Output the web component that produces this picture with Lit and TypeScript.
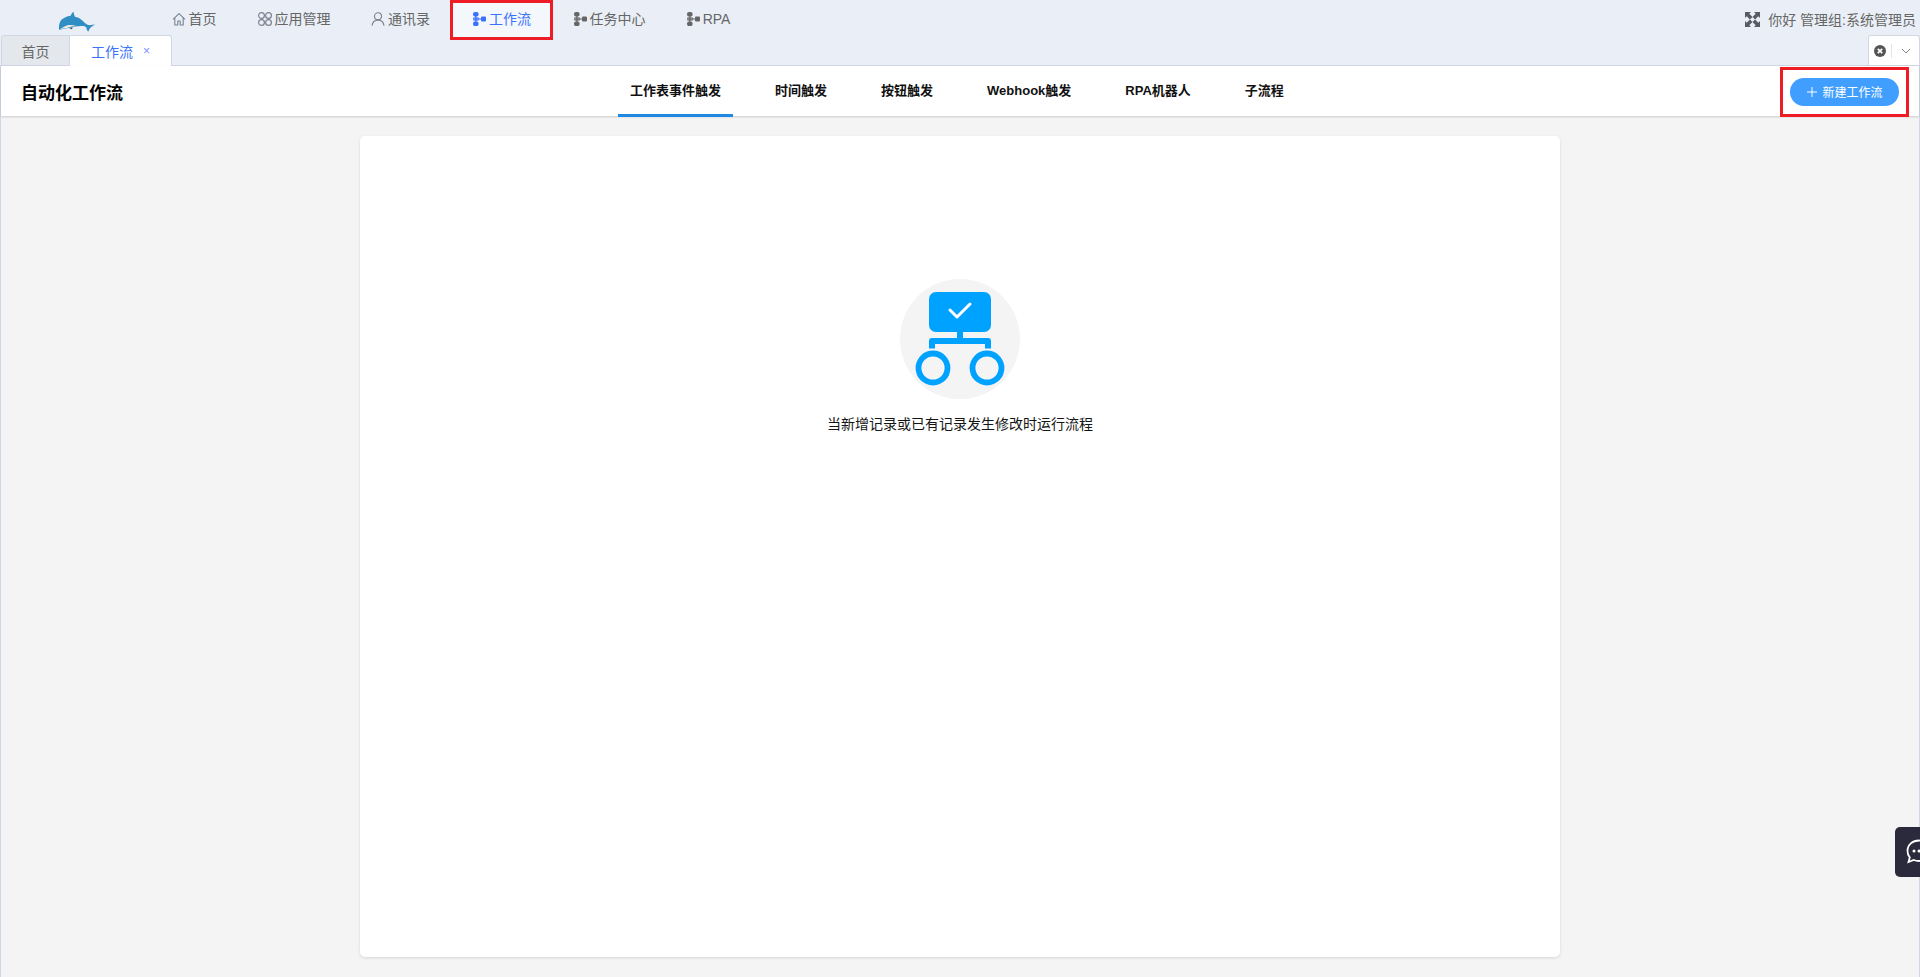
import { LitElement, html, css, svg } from 'lit';
import { customElement } from 'lit/decorators.js';

const homeIcon = svg`<path d="M1 7.300 7 1.600l6 5.700M2.800 6v7h3V9h2.400v4h3V6" fill="none" stroke="#7a828e" stroke-width="1.100" stroke-linejoin="round"/>`;
const appsIcon = svg`<g fill="none" stroke="#7a828e" stroke-width="1.200"><circle cx="3.500" cy="3.500" r="2.900"/><circle cx="10.500" cy="3.500" r="2.900"/><circle cx="3.500" cy="10.500" r="2.900"/><circle cx="10.500" cy="10.500" r="2.900"/></g>`;
const userIcon = svg`<g fill="none" stroke="#7a828e" stroke-width="1.100"><circle cx="7" cy="4.300" r="3.500"/><path d="M1 13.800c.4-3.400 2.900-5.700 6-5.700s5.600 2.300 6 5.700"/></g>`;
const flowIcon = svg`<g fill="currentColor"><rect x="1" y="0" width="5.600" height="4.600" rx="2"/><rect x="1" y="9.500" width="5.600" height="4.600" rx="2"/><rect x="1" y="5.200" width="6" height="3.600" rx="1" opacity="0.75"/><rect x="9" y="4.600" width="5" height="5" rx="1"/><rect x="2.900" y="4" width="1.800" height="6" opacity="0.75"/><rect x="6" y="6.300" width="4" height="1.400" opacity="0.75"/></g>`;

const navItems = [
    { label: '首页', icon: homeIcon, width: 86 },
    { label: '应用管理', icon: appsIcon, width: 114 },
    { label: '通讯录', icon: userIcon, width: 99 },
    { label: '工作流', icon: flowIcon, width: 103, active: true },
    { label: '任务中心', icon: flowIcon, width: 112 },
    { label: 'RPA', icon: flowIcon, width: 86 },
];

const triggerTabs = ['工作表事件触发', '时间触发', '按钮触发', 'Webhook触发', 'RPA机器人', '子流程'];

@customElement('app-root')
export class AppRoot extends LitElement {
    static styles = css`
        :host {
            display: flex;
            flex-direction: column;
            height: 100vh;
            overflow: hidden;
            position: relative;
            font-family: 'Liberation Sans', 'Noto Sans CJK SC', sans-serif;
            font-size: 14px;
            color: #666;
            background: #f4f4f4;
        }

        /* top bar */
        .top {
            flex: none;
            height: 65px;
            background: #eaeff7;
            display: flex;
            flex-direction: column;
        }

        .nav-row {
            height: 35px;
            display: flex;
            align-items: flex-start;
            position: relative;
        }

        .logo {
            width: 151px;
            height: 35px;
            flex: none;
        }

        .logo svg {
            display: block;
        }

        .nav {
            display: flex;
        }

        .nav-item {
            box-sizing: border-box;
            height: 40px;
            display: flex;
            align-items: flex-start;
            justify-content: center;
            gap: 3px;
            padding-top: 11px;
            line-height: 16px;
            white-space: nowrap;
            color: #666;
        }

        .nav-item svg {
            width: 14px;
            height: 14px;
            margin-top: 1px;
            flex: none;
        }

        .nav-item.active {
            color: #3a72ff;
            background: #f4f7fb;
            border: 3px solid #ee1c25;
            padding-top: 8px;
            position: relative;
            z-index: 1;
        }

        .user {
            margin-left: auto;
            display: flex;
            align-items: center;
            gap: 8px;
            height: 38px;
            padding-right: 4px;
            white-space: nowrap;
        }

        .user svg {
            width: 15px;
            height: 15px;
        }

        .tab-row {
            flex: 1;
            display: flex;
            align-items: flex-end;
            padding-left: 1px;
        }

        .page-tab {
            box-sizing: border-box;
            height: 30px;
            display: flex;
            align-items: center;
            justify-content: center;
            border: 1px solid #d0d7e6;
            border-bottom: none;
            background: #e4e8ec;
            width: 69px;
            color: #666;
            border-radius: 3px 0 0 0;
        }

        .page-tab.current {
            width: 102px;
            background: #fff;
            color: #3a72ff;
            border-left: none;
            border-radius: 0 3px 0 0;
            gap: 10px;
            height: 31px;
            margin-bottom: -1px;
            position: relative;
        }

        .page-tab .x {
            font-size: 12px;
            line-height: 14px;
            color: #7f8cff;
        }

        .tab-tools {
            margin-left: auto;
            box-sizing: border-box;
            width: 52px;
            height: 30px;
            background: #fff;
            border: 1px solid #d0d7e6;
            border-bottom: none;
            border-radius: 3px 3px 0 0;
            display: flex;
            align-items: center;
            padding-left: 5px;
        }

        .tab-tools svg {
            flex: none;
        }

        .tab-tools i {
            width: 1px;
            height: 14px;
            background: #e4e4e4;
            margin: 0 8px 0 5px;
        }

        /* page header */
        .page {
            flex: 1;
            display: flex;
            flex-direction: column;
            min-height: 0;
            border: 1px solid #d0d7e6;
            border-width: 1px 1px 0;
        }

        .header {
            flex: none;
            height: 50px;
            background: #fff;
            display: grid;
            grid-template-columns: 617px auto 1fr;
            align-items: center;
            box-shadow: 0 1px 2px rgba(0, 0, 0, 0.16);
            position: relative;
        }

        h1 {
            margin: 0 0 0 20px;
            font-size: 17px;
            font-weight: 700;
            color: #000;
        }

        .triggers {
            display: flex;
            gap: 30px;
            height: 100%;
        }

        .trigger {
            box-sizing: border-box;
            height: 51px;
            padding: 0 12px 2px;
            display: flex;
            align-items: center;
            font-size: 13px;
            font-weight: 700;
            color: #111;
            border-bottom: 3px solid transparent;
            white-space: nowrap;
        }

        .trigger.on {
            border-bottom-color: #1e88e5;
        }

        .actions {
            justify-self: end;
            padding-right: 20px;
        }

        .create {
            box-sizing: border-box;
            width: 109px;
            height: 28px;
            border: none;
            border-radius: 14px;
            background: #409eff;
            color: #fff;
            display: flex;
            align-items: center;
            justify-content: center;
            gap: 4px;
            font: inherit;
            font-size: 12px;
            padding: 0;
        }

        .create svg {
            width: 12px;
            height: 12px;
        }

        .mark {
            position: absolute;
            box-sizing: border-box;
            top: 1px;
            right: 10px;
            width: 129px;
            height: 50px;
            border: 3px solid #ee1c25;
            pointer-events: none;
        }

        /* card */
        .body {
            flex: 1;
            min-height: 0;
            padding: 20px 359px;
        }

        .card {
            box-sizing: border-box;
            height: 100%;
            background: #fff;
            border-radius: 5px;
            box-shadow: 0 1px 3px rgba(0, 0, 0, 0.12);
            display: flex;
            flex-direction: column;
            align-items: center;
            padding-top: 143px;
        }

        .empty-icon {
            width: 120px;
            height: 120px;
            display: block;
        }

        .empty-text {
            margin-top: 15px;
            line-height: 20px;
            color: #151515;
        }

        .chat {
            position: absolute;
            right: 0;
            top: 827px;
            width: 25px;
            height: 50px;
            background: #2b2a3c;
            border-radius: 5px 0 0 5px;
            overflow: hidden;
        }

        .chat svg {
            position: absolute;
            left: 11px;
            top: 12px;
            width: 26px;
            height: 26px;
        }
    `;

    render() {
        return html`
            <div class="top">
                <div class="nav-row">
                    <div class="logo">
                        <svg width="151" height="35" viewBox="0 0 151 35">
                            <path fill="#2f8fc4" d="M59 29.800c-.3-3.500.2-6.800 1.700-9.100 1.800-2.600 6.500-4.600 10-5 .6-1.600 1.400-3.100 2.600-4 .6 1.500.8 3.300 1.700 5 2.400.3 4.700 1.500 6.700 3.300 2.300 2 4.300 4.300 6.600 5 2.200.4 4.600-.1 6.700-.7-1.700 1.500-3.800 2.700-5 4-.6 1-1 2-1.800 3.400-1-1-1.800-2.800-1.900-4.200-.8-.9-1.600-1.300-2.800-1.500-3-.3-5.900.1-8.500.5-2.600.5-5 1-8 1.800-2.600.4-4.600 1-8.200 1.500z"/>
                            <path fill="#f1ece2" d="M60.200 29c2.400-1.300 4.500-3 7.300-3.700 2.800-.5 5.600-.3 8.300.5-3 .5-5.400 1-8.300 1.900-2.500.7-4.800 1.200-7.300 1.300z"/>
                            <path fill="#1d4a6a" d="M69 28l3.600-.8-.6 2.100z"/>
                        </svg>
                    </div>
                    <div class="nav">
                        ${navItems.map(
                            (item) => html`<div
                                class="nav-item ${item.active ? 'active' : ''}"
                                style="width:${item.width}px"
                            >
                                <svg viewBox="0 0 14 14">${item.icon}</svg>${item.label}
                            </div>`,
                        )}
                    </div>
                    <div class="user">
                        <svg viewBox="0 0 15 15" fill="#565c66">
                            <path d="M0 0h6L4.300 1.700 7.500 4.900 4.900 7.500 1.700 4.300 0 6zM15 0v6L13.300 4.300 10.100 7.500 7.500 4.900 10.700 1.700 9 0zM0 15V9L1.700 10.700 4.900 7.500 7.500 10.100 4.300 13.300 6 15zM15 15H9L10.700 13.300 7.500 10.100 10.100 7.500 13.300 10.700 15 9z"/>
                        </svg>
                        <span>你好 管理组:系统管理员</span>
                    </div>
                </div>
                <div class="tab-row">
                    <div class="page-tab">首页</div>
                    <div class="page-tab current">工作流<span class="x">×</span></div>
                    <div class="tab-tools">
                        <svg width="12" height="12" viewBox="0 0 12 12">
                            <circle cx="6" cy="6" r="6" fill="#555"/>
                            <path d="M3.800 3.800l4.400 4.400M8.200 3.800L3.800 8.200" stroke="#fff" stroke-width="1.800"/>
                        </svg>
                        <i></i>
                        <svg width="12" height="12" viewBox="0 0 12 12">
                            <path d="M2 4l4 4 4-4" fill="none" stroke="#888" stroke-width="1"/>
                        </svg>
                    </div>
                </div>
            </div>
            <div class="page">
                <div class="header">
                    <h1>自动化工作流</h1>
                    <div class="triggers">
                        ${triggerTabs.map(
                            (name, i) => html`<div class="trigger ${i === 0 ? 'on' : ''}">${name}</div>`,
                        )}
                    </div>
                    <div class="actions">
                        <button class="create">
                            <svg viewBox="0 0 12 12">
                                <path d="M6 1v10M1 6h10" stroke="#fff" stroke-width="1"/>
                            </svg>
                            新建工作流
                        </button>
                    </div>
                    <div class="mark"></div>
                </div>
                <div class="body">
                    <div class="card">
                        <svg class="empty-icon" viewBox="0 0 120 120">
                            <circle cx="60" cy="60" r="60" fill="#f4f4f4"/>
                            <rect x="29" y="13" width="62" height="40" rx="7" fill="#00a2ff"/>
                            <path d="M50 31l7 7 13-13" fill="none" stroke="#fff" stroke-width="3" stroke-linecap="round" stroke-linejoin="round"/>
                            <path fill="#00a2ff" d="M57 53h6v6h25a3 3 0 0 1 3 3v7.500h-6V65H35v4.500h-6V62a3 3 0 0 1 3-3h25z"/>
                            <circle cx="33" cy="89" r="14.500" fill="none" stroke="#00a2ff" stroke-width="5.800"/>
                            <circle cx="87" cy="89" r="14.500" fill="none" stroke="#00a2ff" stroke-width="5.800"/>
                        </svg>
                        <div class="empty-text">当新增记录或已有记录发生修改时运行流程</div>
                    </div>
                </div>
            </div>
            <div class="chat">
                <svg viewBox="0 0 26 26">
                    <path d="M13 1.500C6.500 1.500 1.500 5.800 1.500 12c0 2.500.9 4.700 2.300 6.500L2.500 23l5.200-2c1.600.7 3.400 1 5.300 1 6.500 0 11.500-4.300 11.500-10S19.500 1.500 13 1.500z" fill="none" stroke="#fff" stroke-width="1.800"/>
                    <circle cx="8" cy="12" r="1.500" fill="#fff"/>
                    <circle cx="13" cy="12" r="1.500" fill="#fff"/>
                </svg>
            </div>
        `;
    }
}
